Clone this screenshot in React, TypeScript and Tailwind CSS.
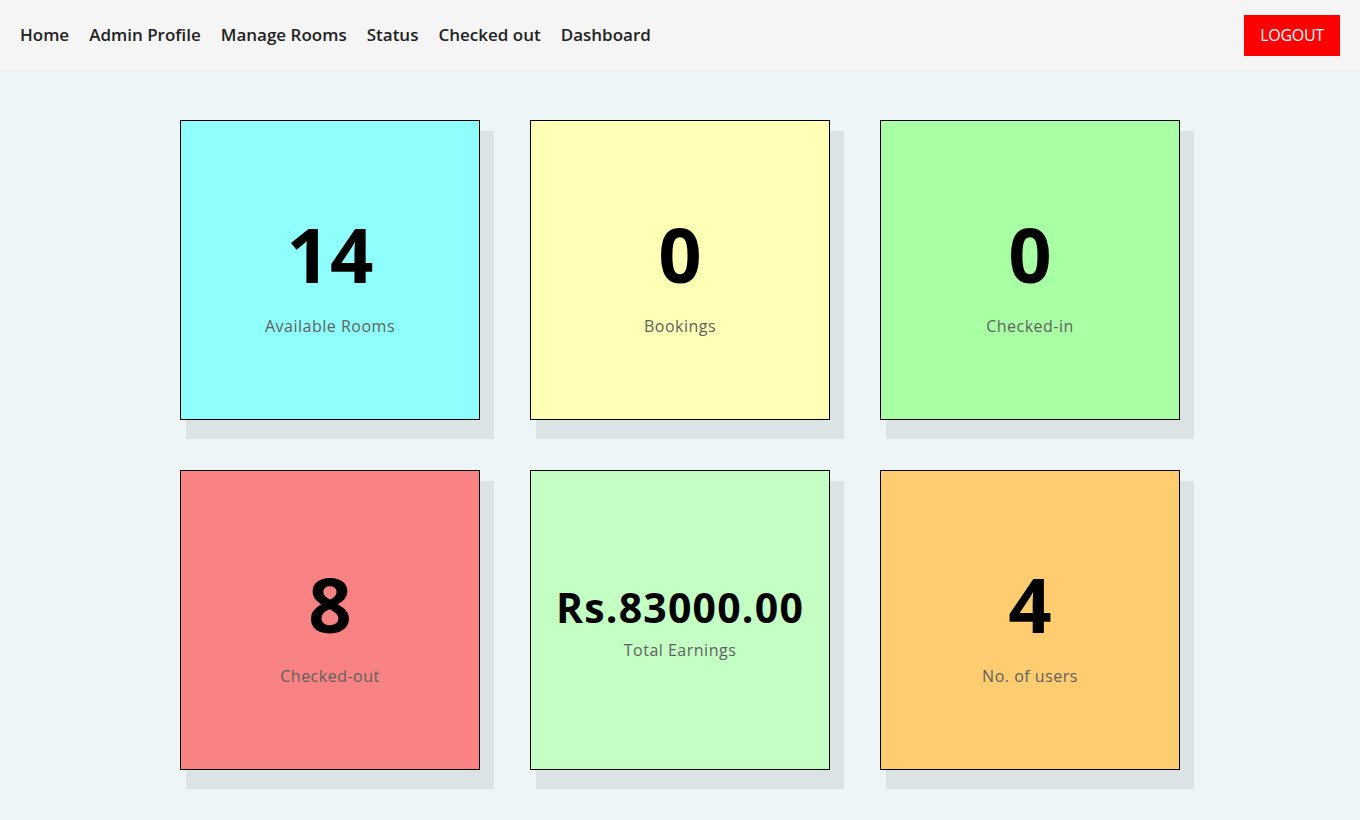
const stats = [
  { value: "14", label: "Available Rooms", bg: "bg-[#8ffffe]", big: true },
  { value: "0", label: "Bookings", bg: "bg-[#ffffb5]", big: true },
  { value: "0", label: "Checked-in", bg: "bg-[#a8ffa4]", big: true },
  { value: "8", label: "Checked-out", bg: "bg-[#f98282]", big: true },
  { value: "Rs.83000.00", label: "Total Earnings", bg: "bg-[#c4ffc4]", big: false },
  { value: "4", label: "No. of users", bg: "bg-[#ffcc70]", big: true },
];

const links = ["Home", "Admin Profile", "Manage Rooms", "Status", "Checked out", "Dashboard"];

export default function App() {
  return (
    <div className="min-h-screen bg-[#edf5f7] font-['Open_Sans',sans-serif]">
      {/* navbar */}
      <nav className="h-[70px] bg-[#f5f5f5] flex items-center justify-between pl-5 pr-5">
        <ul className="flex items-center gap-5">
          {links.map((l) => (
            <li key={l} className="text-[17px] font-semibold text-[#222] tracking-[0px]">
              {l}
            </li>
          ))}
        </ul>
        <button className="bg-[#ff0000] text-white text-[16px] h-[41px] w-[96px] tracking-[-0.3px]">
          LOGOUT
        </button>
      </nav>

      {/* stat cards */}
      <div className="grid grid-cols-[repeat(3,300px)] gap-[50px] justify-center pt-[50px] pb-[50px]">
        {stats.map((s) => (
          <div
            key={s.label}
            className={`${s.bg} w-[300px] h-[300px] border border-black flex flex-col items-center justify-center shadow-[10px_15px_0_4px_#dce3e5]`}
          >
            {s.big ? (
              <h1 className="text-[76px] font-bold leading-[80px] text-black mt-[12px]">{s.value}</h1>
            ) : (
              <h1 className="text-[41px] font-bold leading-[48px] text-black mt-[4px] tracking-[1.2px]">
                {s.value}
              </h1>
            )}
            <p className={`text-[16px] text-[#5f5f5f] tracking-[0.5px] ${s.big ? "mt-[20px]" : "mt-[7px]"}`}>
              {s.label}
            </p>
          </div>
        ))}
      </div>
    </div>
  );
}
